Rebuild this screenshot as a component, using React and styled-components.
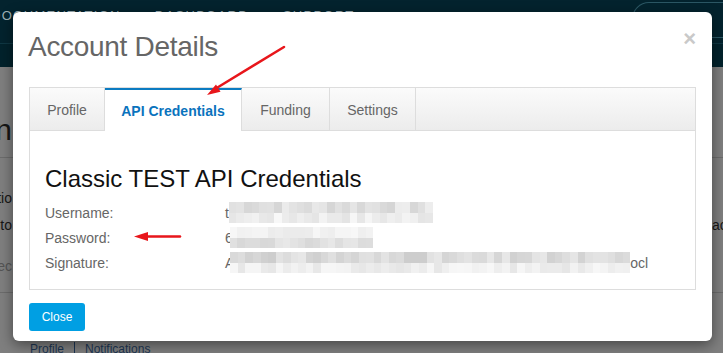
import React from "react";
import styled, { createGlobalStyle } from "styled-components";

const GlobalStyle = createGlobalStyle`
  html, body { margin: 0; padding: 0; }
  body {
    background: #7f7f7f;
    font-family: "Liberation Sans", Arial, sans-serif;
    overflow: hidden;
  }
`;

const Page = styled.div`
  width: 723px;
  height: 353px;
  position: relative;
  overflow: hidden;
`;

/* ---- page behind the dialog (dimmed) ---- */
const TopNav = styled.div`
  height: 44px;
  box-sizing: border-box;
  background: #03232e;
  border-bottom: 1px solid #0f3743;
  display: flex;
  justify-content: space-between;
  align-items: flex-start;
`;
const NavLinks = styled.div`
  display: flex;
  gap: 34px;
  margin-left: -9px;
  padding-top: 8px;
`;
const NavLink = styled.span`
  color: #9fb1b7;
  font-size: 13px;
  letter-spacing: 1.3px;
`;
const NavButton = styled.div`
  margin-top: 2px;
  width: 90px;
  height: 34px;
  border: 1px solid #2b5764;
  border-right: none;
  border-radius: 17px 0 0 17px;
`;
const SubNav = styled.div`
  height: 23px;
  background: #02222c;
`;
const Section = styled.div`
  height: ${(p) => p.$h}px;
  border-bottom: ${(p) => (p.$line ? "1px solid #6c6c6c" : "none")};
  display: flex;
  flex-direction: column;
  padding-top: ${(p) => p.$pt || 0}px;
  box-sizing: border-box;
`;
const BgRow = styled.div`
  height: ${(p) => p.$h}px;
  display: flex;
  justify-content: space-between;
  align-items: center;
`;
const Clip = styled.div`
  width: ${(p) => p.$w}px;
  overflow: hidden;
  display: flex;
  justify-content: ${(p) => (p.$end ? "flex-end" : "flex-start")};
  white-space: nowrap;
  color: ${(p) => p.$color || "#161616"};
  font-size: ${(p) => p.$size || 14}px;
`;
const FooterLinks = styled.div`
  display: flex;
  align-items: center;
  padding-left: 30px;
  color: #1d3654;
  font-size: 12px;
`;
const Sep = styled.span`
  width: 1px;
  height: 14px;
  background: #1d3654;
  margin: 0 10px;
`;

/* ---- dialog ---- */
const Modal = styled.div`
  position: absolute;
  top: 12px;
  left: 13px;
  width: 699px;
  height: 329px;
  box-sizing: border-box;
  background: #fff;
  border-radius: 6px;
  box-shadow: 0 4px 14px rgba(0, 0, 0, 0.45);
  padding: 19px 16px 0;
  display: flex;
  flex-direction: column;
`;
const ModalHeader = styled.div`
  display: flex;
  justify-content: space-between;
  align-items: flex-start;
`;
const Title = styled.h2`
  margin: 0 0 0 -1px;
  font-size: 28px;
  line-height: 31px;
  font-weight: normal;
  color: #666;
  letter-spacing: -0.3px;
`;
const CloseX = styled.span`
  margin-top: -3px;
  font-size: 22px;
  line-height: 22px;
  font-weight: bold;
  color: #c9c9c9;
`;
const TabBox = styled.div`
  margin-top: 25px;
  border: 1px solid #ddd;
`;
const TabBar = styled.div`
  height: 43px;
  box-sizing: border-box;
  display: flex;
  background: linear-gradient(#fbfbfb, #ececec);
  border-bottom: 1px solid #ddd;
`;
const Tab = styled.div`
  width: ${(p) => p.$w}px;
  box-sizing: border-box;
  display: flex;
  align-items: center;
  justify-content: center;
  border-right: 1px solid #ddd;
  font-size: 14px;
  color: ${(p) => (p.$active ? "#0a73bd" : "#666")};
  font-weight: ${(p) => (p.$active ? "bold" : "normal")};
  background: ${(p) => (p.$active ? "#fff" : "transparent")};
  border-top: ${(p) => (p.$active ? "2px solid #0b7bc1" : "none")};
  margin-bottom: ${(p) => (p.$active ? "-1px" : "0")};
  padding-top: ${(p) => (p.$active ? "0" : "2px")};
`;
const TabContent = styled.div`
  padding: 33px 15px 14px;
`;
const Heading = styled.h3`
  margin: 0 0 6px;
  font-size: 24px;
  line-height: 30px;
  font-weight: normal;
  color: #111;
`;
const Row = styled.div`
  display: flex;
  align-items: center;
  height: 25px;
  font-size: 14px;
  color: #666;
`;
const Label = styled.div`
  width: 180px;
`;
const Value = styled.div`
  display: flex;
  align-items: center;
`;
const Mosaic = styled.div`
  display: grid;
  grid-template-columns: repeat(${(p) => p.$cols}, 7.55px);
  grid-template-rows: 10.5px 10px;
  margin-left: ${(p) => p.$offset}px;
`;
const Cell = styled.div`
  background: rgb(${(p) => p.$t}, ${(p) => p.$t}, ${(p) => p.$t});
`;
const Footer = styled.div`
  margin-top: 13px;
`;
const CloseButton = styled.button`
  width: 56px;
  height: 28px;
  border: none;
  border-radius: 3px;
  background: #009fe3;
  color: #fff;
  font-family: "Liberation Sans", Arial, sans-serif;
  font-size: 12px;
  padding: 0;
`;
const Arrows = styled.svg`
  position: absolute;
  left: 0;
  top: 0;
  pointer-events: none;
`;

function rng(seed) {
  let s = seed;
  return () => {
    s = (s * 9301 + 49297) % 233280;
    return s / 233280;
  };
}

function Pixels({ cols, top, bottom, seed, offset }) {
  const r = rng(seed);
  const cells = [];
  [top, bottom].forEach((range, row) => {
    for (let i = 0; i < cols; i++) {
      const t = Math.round(range[0] + r() * (range[1] - range[0]));
      cells.push(<Cell key={row + "-" + i} $t={t} />);
    }
  });
  return (
    <Mosaic $cols={cols} $offset={offset}>
      {cells}
    </Mosaic>
  );
}

export default function App() {
  return (
    <Page>
      <GlobalStyle />
      <TopNav>
        <NavLinks>
          <NavLink>DOCUMENTATION</NavLink>
          <NavLink>DASHBOARD</NavLink>
          <NavLink>SUPPORT</NavLink>
        </NavLinks>
        <NavButton />
      </TopNav>
      <SubNav />
      <Section $h={91} $line $pt={43}>
        <BgRow $h={40}>
          <Clip $w={12} $end $size={30}>
            Administration
          </Clip>
        </BgRow>
      </Section>
      <Section $h={135} $line $pt={28}>
        <BgRow $h={24}>
          <Clip $w={12} $end>
            Configuratio
          </Clip>
        </BgRow>
        <BgRow $h={32}>
          <Clip $w={12} $end>
            Go to
          </Clip>
          <Clip $w={11}>access</Clip>
        </BgRow>
        <BgRow $h={52}>
          <Clip $w={12} $end $color="#555">
            Selec
          </Clip>
        </BgRow>
      </Section>
      <Section $h={60} $pt={49}>
        <FooterLinks>
          Profile
          <Sep />
          Notifications
        </FooterLinks>
      </Section>

      <Modal>
        <ModalHeader>
          <Title>Account Details</Title>
          <CloseX>×</CloseX>
        </ModalHeader>
        <TabBox>
          <TabBar>
            <Tab $w={75}>Profile</Tab>
            <Tab $w={137} $active>
              API Credentials
            </Tab>
            <Tab $w={88}>Funding</Tab>
            <Tab $w={86}>Settings</Tab>
          </TabBar>
          <TabContent>
            <Heading>Classic TEST API Credentials</Heading>
            <Row>
              <Label>Username:</Label>
              <Value>
                t
                <Pixels cols={27} top={[212, 238]} bottom={[226, 248]} seed={7} offset={0} />
              </Value>
            </Row>
            <Row>
              <Label>Password:</Label>
              <Value>
                6
                <Pixels cols={19} top={[232, 247]} bottom={[216, 234]} seed={19} offset={-3} />
              </Value>
            </Row>
            <Row>
              <Label>Signature:</Label>
              <Value>
                A
                <Pixels cols={53} top={[204, 232]} bottom={[230, 248]} seed={31} offset={-4} />
                ocl
              </Value>
            </Row>
          </TabContent>
        </TabBox>
        <Footer>
          <CloseButton>Close</CloseButton>
        </Footer>
      </Modal>

      <Arrows width="723" height="353" viewBox="0 0 723 353">
        <line x1="284" y1="47" x2="215" y2="89" stroke="#e8161b" strokeWidth="2.5" strokeLinecap="round" />
        <polygon points="207,95 220.5,91.8 216,84.5" fill="#e8161b" />
        <line x1="180" y1="236.5" x2="144" y2="236.5" stroke="#e8161b" strokeWidth="2.5" strokeLinecap="round" />
        <polygon points="134,236.5 148,232 148,241" fill="#e8161b" />
      </Arrows>
    </Page>
  );
}
